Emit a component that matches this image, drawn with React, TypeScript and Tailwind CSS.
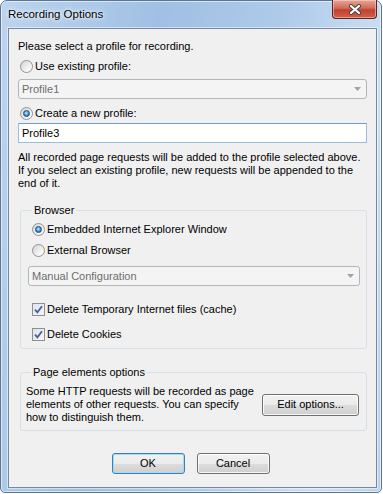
import type { ReactNode } from 'react'

function Radio({ checked, children }: { checked?: boolean; children: ReactNode }) {
  return (
    <label className="flex h-[13px] items-center gap-[2px]">
      <span className="flex h-[13px] w-[13px] items-center justify-center rounded-full border border-[#929292] bg-[linear-gradient(135deg,#d4d4d4,#f6f6f6_70%,#ffffff)]">
        {checked && (
          <span className="h-[7px] w-[7px] rounded-full border border-[#1b4b7a] bg-[radial-gradient(circle_at_45%_40%,#c5ecfd,#3a94d6_55%,#1d5b95)]" />
        )}
      </span>
      <span>{children}</span>
    </label>
  )
}

function Check({ children }: { children: ReactNode }) {
  return (
    <label className="flex h-[13px] items-center gap-[2px]">
      <span className="flex h-[13px] w-[13px] items-center justify-center border border-[#8e8f8f] bg-[linear-gradient(135deg,#dfe4ec,#f4f6f9)]">
        <svg width="9" height="9" viewBox="0 0 9 9">
          <path d="M1 4.6 L3.4 7.4 L8 1.2" fill="none" stroke="#4a5e9c" strokeWidth="1.8" />
        </svg>
      </span>
      <span>{children}</span>
    </label>
  )
}

function Combo({ value }: { value: string }) {
  return (
    <div className="flex h-[20px] items-center justify-between rounded-[3px] border border-[#b3b6b8] bg-[#f4f4f4] pl-[3px] pr-[5px] text-[#6d6d6d]">
      <span>{value}</span>
      <svg width="7" height="4" viewBox="0 0 7 4">
        <polygon points="0,0 7,0 3.5,4" fill="#a3a3a3" />
      </svg>
    </div>
  )
}

function Button({ children, focused, className }: { children: ReactNode; focused?: boolean; className: string }) {
  return (
    <button
      className={
        'flex items-center justify-center rounded-[3px] border bg-[linear-gradient(#f2f2f2,#ebebeb_50%,#dddddd_50%,#cfcfcf)] ' +
        (focused
          ? 'border-[#3c7fb1] shadow-[inset_0_0_0_1px_#9fdcf7] '
          : 'border-[#707070] shadow-[inset_0_0_0_1px_rgba(255,255,255,0.8)] ') +
        className
      }
    >
      {children}
    </button>
  )
}

export default function App() {
  return (
    <div className="h-[494px] w-[383px] bg-white font-['Liberation_Sans',Arial,sans-serif] text-[11px] leading-[13px] text-black">
      <div className="flex h-[493px] w-[382px] flex-col rounded-t-[7px] rounded-b-[5px] border border-[#5d7590] bg-[linear-gradient(100deg,#bcd4ee_0%,#9fc0e4_35%,#adcae9_60%,#cde0f3_85%,#b9d2ed_100%)] pb-[4px] pl-[7px] pr-[4px] shadow-[inset_0_0_0_1px_rgba(255,255,255,0.55)]">
        <div className="flex h-[27px] items-start justify-between">
          <span className="mt-[7px] text-[11.5px] [text-shadow:0_0_6px_#fff,0_0_3px_#fff]">Recording Options</span>
          <div className="-mt-[1px] flex h-[19px] w-[45px] items-center justify-center rounded-b-[4px] border border-t-0 border-[#5a2520] bg-[linear-gradient(#e6a79a,#d26a58_45%,#c0412f_55%,#d2604a)] shadow-[inset_0_0_0_1px_rgba(255,220,210,0.5)]">
            <svg width="14" height="11" viewBox="0 0 14 11">
              <path d="M3 2 L11 9 M11 2 L3 9" stroke="#43413f" strokeWidth="4" strokeLinecap="round" />
              <path d="M3 2 L11 9 M11 2 L3 9" stroke="#ffffff" strokeWidth="2.2" strokeLinecap="round" />
            </svg>
          </div>
        </div>

        <div className="flex flex-1 flex-col border border-[#7689a0] bg-[#f0f0f0] px-[9px] pt-[11px] shadow-[0_0_0_1px_rgba(255,255,255,0.5)]">
          <p>Please select a profile for recording.</p>

          <div className="mt-[7px] ml-[2px]">
            <Radio>Use existing profile:</Radio>
          </div>
          <div className="mt-[6px]">
            <Combo value="Profile1" />
          </div>

          <div className="mt-[8px] ml-[2px]">
            <Radio checked>Create a new profile:</Radio>
          </div>
          <input
            readOnly
            value="Profile3"
            className="mt-[3px] h-[20px] border border-[#9cbde0] border-t-[#6f9fd1] bg-white px-[3px] outline-none"
          />

          <p className="mt-[8px] whitespace-nowrap">
            All recorded page requests will be added to the profile selected above.
            <br />
            If you select an existing profile, new requests will be appended to the
            <br />
            end of it.
          </p>

          <fieldset className="mt-[14px] ml-[2px] flex flex-col rounded-[3px] border border-[#d5dfe5] pb-[7px] pl-[7px] pr-[6px] pt-[6px]">
            <legend className="ml-[4px] px-[2px]">Browser</legend>
            <div className="ml-[4px]">
              <Radio checked>Embedded Internet Explorer Window</Radio>
            </div>
            <div className="mt-[8px] ml-[4px]">
              <Radio>External Browser</Radio>
            </div>
            <div className="mt-[9px]">
              <Combo value="Manual Configuration" />
            </div>
            <div className="mt-[17px] ml-[4px]">
              <Check>Delete Temporary Internet files (cache)</Check>
            </div>
            <div className="mt-[12px] ml-[4px]">
              <Check>Delete Cookies</Check>
            </div>
          </fieldset>

          <fieldset className="mt-[17px] ml-[2px] flex items-center justify-between rounded-[3px] border border-[#d5dfe5] pb-[6px] pl-[5px] pr-[7px] pt-[6px]">
            <legend className="ml-[5px] px-[2px]">Page elements options</legend>
            <p className="whitespace-nowrap">
              Some HTTP requests will be recorded as page
              <br />
              elements of other requests. You can specify
              <br />
              how to distinguish them.
            </p>
            <Button className="h-[22px] w-[97px]">Edit options...</Button>
          </fieldset>

          <div className="mt-[22px] flex justify-center gap-[12px] pr-[4px]">
            <Button focused className="h-[21px] w-[73px]">
              OK
            </Button>
            <Button className="h-[21px] w-[73px]">Cancel</Button>
          </div>
        </div>
      </div>
    </div>
  )
}
